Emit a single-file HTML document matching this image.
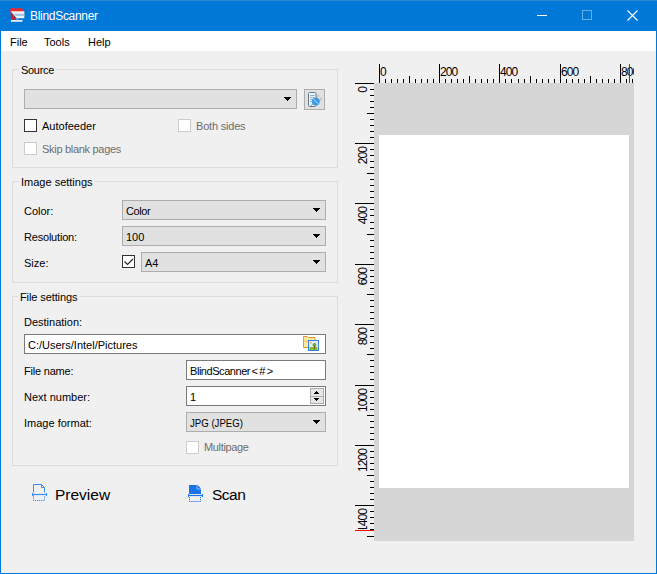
<!DOCTYPE html>
<html><head><meta charset="utf-8">
<style>
*{margin:0;padding:0;box-sizing:border-box}
html,body{width:657px;height:574px;overflow:hidden;background:#f0f0f0}
body{position:relative;font-family:"Liberation Sans",sans-serif;font-size:11px;color:#000}
.a{position:absolute}
.t{position:absolute;white-space:nowrap;line-height:14px}
#win{position:absolute;left:0;top:0;width:657px;height:574px;border:1px solid #0078d7;border-top:none;background:#f0f0f0}
#title{position:absolute;left:0;top:0;width:657px;height:31px;background:#0078d7}
#menu{position:absolute;left:1px;top:31px;width:655px;height:20px;background:#fff}
.grp{position:absolute;border:1px solid #dcdcdc}
.gl{position:absolute;background:#f0f0f0;padding:0 2px;white-space:nowrap;line-height:14px}
.cb{position:absolute;background:#e1e1e1;border:1px solid #adadad}
.cb .arr{position:absolute;right:5px;top:7px;width:7px;height:4px;background:linear-gradient(#000,#000) 0 0/7px 1px no-repeat,linear-gradient(#000,#000) 1px 1px/5px 1px no-repeat,linear-gradient(#000,#000) 2px 2px/3px 1px no-repeat,linear-gradient(#000,#000) 3px 3px/1px 1px no-repeat}
.cb .v{position:absolute;left:3px;top:3px;line-height:14px;white-space:nowrap}
.ck{position:absolute;width:13px;height:13px;border:1px solid #333;background:#fff}
.ck.dis{border-color:#cccccc}
.dis{color:#6d6d6d}
.tb{position:absolute;background:#fff;border:1px solid #7a7a7a}
.tb .v{position:absolute;left:3px;top:3px;line-height:14px;white-space:nowrap}
</style></head><body>
<div id="win"></div>
<div id="title">
  <div class="a" style="left:0;top:0;width:657px;height:1px;background:#2f8ad6"></div>
  <svg class="a" style="left:9px;top:7px" width="16" height="16" viewBox="0 0 16 16">
    <path d="M1 2Q3 0.3 5.5 1.3Q7 1.8 8.5 1.3Q11 0.3 13.5 2L14.5 3V5.5H1.5Z" fill="#ea2a2e"/>
    <path d="M1.5 4.5L2 12.5H7.5Z" fill="#d81c1c"/>
    <path d="M2 4.2H15.3V11.2H8.3Z" fill="#eef2f6"/>
    <path d="M4.2 6.7H15.3V9H6.2Z" fill="#a9c4e0"/>
    <path d="M2.3 4.6L8.3 11.2" stroke="#fff" stroke-width="0.8"/>
    <rect x="7.6" y="11" width="1" height="2" fill="#b0c0d0"/>
    <rect x="2" y="13" width="11.5" height="1.8" fill="#ece6ee"/>
  </svg>
  <div class="t" style="left:30px;top:9px;color:#fff;font-size:12px;letter-spacing:-0.3px">BlindScanner</div>
  <div class="a" style="left:537px;top:15px;width:10px;height:1px;background:#fff"></div>
  <div class="a" style="left:582px;top:10px;width:10px;height:10px;border:1px solid #66aee7"></div>
  <svg class="a" style="left:627px;top:10px" width="11" height="11" viewBox="0 0 11 11"><path d="M0.5 0.5L10.5 10.5M10.5 0.5L0.5 10.5" stroke="#fff" stroke-width="1.1"/></svg>
</div>
<div id="menu">
  <div class="t" style="left:9px;top:4px">File</div>
  <div class="t" style="left:43px;top:4px">Tools</div>
  <div class="t" style="left:87px;top:4px">Help</div>
</div>

<!-- Source -->
<div class="grp" style="left:12px;top:69px;width:326px;height:99px"></div>
<div class="gl" style="left:19px;top:63px;letter-spacing:-0.3px">Source</div>
<div class="cb" style="left:24px;top:89px;width:273px;height:20px"><div class="arr"></div></div>
<div class="cb" style="left:304px;top:89px;width:21px;height:21px"><svg class="a" style="left:1px;top:1px" width="18" height="18" viewBox="0 0 18 18">
<rect x="2.5" y="1.5" width="7.5" height="14" rx="1.2" fill="#e8f1fa" stroke="#667c94"/>
<path d="M4 4.5h4.5M4 6.5h4.5M4 8.5h3M4 10.5h3" stroke="#9ab0c6" stroke-width="1"/>
<path d="M10.5 6.5l2.5-2.5M13.5 9.5l2.5-2.5" stroke="#9a9a9a" stroke-width="1.4" stroke-dasharray="1 0.6"/>
<path d="M5 14.5l2.5-2.5" stroke="#9a9a9a" stroke-width="1.2" stroke-dasharray="1 0.6"/>
<circle cx="9.8" cy="10.6" r="3.9" fill="#3b9be6"/>
<path d="M7.6 8.2l4.5 4.6" stroke="#c0e0f8" stroke-width="1"/>
</svg></div>
<div class="ck" style="left:24px;top:119px"></div>
<div class="t" style="left:42px;top:119px">Autofeeder</div>
<div class="ck dis" style="left:178px;top:119px"></div>
<div class="t dis" style="left:196px;top:119px;letter-spacing:-0.2px">Both sides</div>
<div class="ck dis" style="left:24px;top:142px"></div>
<div class="t dis" style="left:42px;top:142px;letter-spacing:-0.3px">Skip blank pages</div>

<!-- Image settings -->
<div class="grp" style="left:12px;top:181px;width:326px;height:102px"></div>
<div class="gl" style="left:19px;top:175px">Image settings</div>
<div class="t" style="left:24px;top:204px">Color:</div>
<div class="cb" style="left:122px;top:200px;width:204px;height:20px"><div class="v" style="letter-spacing:-0.4px">Color</div><div class="arr"></div></div>
<div class="t" style="left:24px;top:230px;letter-spacing:-0.2px">Resolution:</div>
<div class="cb" style="left:122px;top:226px;width:204px;height:20px"><div class="v">100</div><div class="arr"></div></div>
<div class="t" style="left:24px;top:256px">Size:</div>
<div class="ck" style="left:122px;top:255px"><svg class="a" style="left:0;top:0" width="11" height="11"><path d="M1.5 5.5L4.5 8.5L10 3" stroke="#222" stroke-width="1.1" fill="none"/></svg></div>
<div class="cb" style="left:141px;top:252px;width:185px;height:20px"><div class="v">A4</div><div class="arr"></div></div>

<!-- File settings -->
<div class="grp" style="left:12px;top:296px;width:326px;height:170px"></div>
<div class="gl" style="left:18px;top:290px;letter-spacing:-0.1px">File settings</div>
<div class="t" style="left:24px;top:315px">Destination:</div>
<div class="tb" style="left:24px;top:334px;width:302px;height:20px"><div class="v">C:/Users/Intel/Pictures</div><svg class="a" style="left:277px;top:0px" width="18" height="18" viewBox="0 0 18 18">
<path d="M1.5 1.5h4l1 1h6.5v10h-11.5z" fill="#fde8a0" stroke="#e39b3a"/>
<path d="M2 6h10" stroke="#f2c060" stroke-width="1"/>
<rect x="6.5" y="5.5" width="10" height="10" fill="#dff0fc" stroke="#3c7fd8"/>
<rect x="7.5" y="12" width="8" height="3" fill="#7cbb2e"/>
<circle cx="12.5" cy="10" r="2" fill="#6aa832"/>
<path d="M12.5 11v3" stroke="#7a5a30"/>
<rect x="8" y="7" width="1.5" height="1.5" fill="#f5a623"/>
</svg></div>
<div class="t" style="left:24px;top:364px;letter-spacing:-0.2px">File name:</div>
<div class="tb" style="left:186px;top:360px;width:140px;height:20px"><div class="v"><span style="letter-spacing:-0.45px">BlindScanner</span><span style="letter-spacing:1.4px;margin-left:1.5px">&lt;#&gt;</span></div></div>
<div class="t" style="left:24px;top:390px">Next number:</div>
<div class="tb" style="left:186px;top:386px;width:140px;height:20px"><div class="v">1</div><svg class="a" style="left:123px;top:1px" width="14" height="16" viewBox="0 0 14 16" shape-rendering="crispEdges">
<rect x="0.5" y="0.5" width="13" height="15" fill="#e6e6e6" stroke="#adadad"/>
<path d="M0 8.5h14" stroke="#adadad"/>
<path d="M6 3h1v1H6zM5 4h3v1H5zM4 5h5v1H4zM4 10h5v1H4zM5 11h3v1H5zM6 12h1v1H6z" fill="#000"/>
</svg></div>
<div class="t" style="left:24px;top:416px">Image format:</div>
<div class="cb" style="left:186px;top:412px;width:140px;height:20px"><div class="v" style="transform:scaleX(0.875);transform-origin:0 0">JPG (JPEG)</div><div class="arr"></div></div>
<div class="ck dis" style="left:186px;top:441px"></div>
<div class="t dis" style="left:204px;top:440px;letter-spacing:-0.35px">Multipage</div>

<!-- Buttons -->
<svg class="a" style="left:30px;top:482px" width="20" height="22" viewBox="0 0 20 22">
<path d="M3.5 10.5V2.5h8l3 3v5" fill="none" stroke="#3d8ef0"/>
<path d="M11.5 2.5v3h3" fill="none" stroke="#3d8ef0"/>
<path d="M2 12.5h15" stroke="#3d8ef0" stroke-width="1.2"/>
<path d="M2.5 11v3M16.5 11v3" stroke="#3d8ef0"/>
<path d="M3.5 13.5v5h11v-5" fill="none" stroke="#3d8ef0" stroke-dasharray="1.2 0.9"/>
</svg>
<div class="t" style="left:55px;top:487px;font-size:15.5px;line-height:16px">Preview</div>
<svg class="a" style="left:186px;top:483px" width="20" height="22" viewBox="0 0 20 22">
<path d="M3 2h8.5l3.5 3.5V11H3z" fill="#1a73e8"/>
<path d="M11 2v4h4" fill="none" stroke="#9ec4f5" stroke-width="0.9"/>
<path d="M2 12.5h15" stroke="#1a73e8" stroke-width="1.2"/>
<path d="M2.5 11v3M16.5 11v3" stroke="#1a73e8"/>
<path d="M3.5 14v4.5h11V14" fill="none" stroke="#1a73e8" stroke-dasharray="1.2 0.9"/>
</svg>
<div class="t" style="left:212px;top:487px;font-size:15.5px;line-height:16px;letter-spacing:-0.5px">Scan</div>

<!-- Preview area -->
<div class="a" style="left:374px;top:83px;width:260px;height:458px;background:#d6d6d6"></div>
<div class="a" style="left:379px;top:135px;width:250px;height:353px;background:#fff"></div>
<svg class="a" style="left:0;top:0" width="657" height="574">
<defs><clipPath id="hc"><rect x="374" y="60" width="260" height="23"/></clipPath><clipPath id="vc"><rect x="350" y="83" width="24" height="446"/></clipPath></defs>
<path d="M379.5 64V83M385.5 79V83M391.5 79V83M397.5 79V83M403.5 79V83M409.5 76V83M415.5 79V83M421.5 79V83M427.5 79V83M433.5 79V83M439.5 64V83M445.5 79V83M451.5 79V83M457.5 79V83M463.5 79V83M469.5 76V83M475.5 79V83M481.5 79V83M487.5 79V83M493.5 79V83M499.5 64V83M505.5 79V83M511.5 79V83M518.5 79V83M524.5 79V83M530.5 76V83M536.5 79V83M542.5 79V83M548.5 79V83M554.5 79V83M560.5 64V83M566.5 79V83M572.5 79V83M578.5 79V83M584.5 79V83M590.5 76V83M596.5 79V83M602.5 79V83M608.5 79V83M614.5 79V83M620.5 64V83M626.5 79V83M632.5 79V83M355 83.5H374M370 89.5H374M370 95.5H374M370 101.5H374M370 107.5H374M367 113.5H374M370 119.5H374M370 125.5H374M370 131.5H374M370 137.5H374M355 143.5H374M370 149.5H374M370 155.5H374M370 161.5H374M370 167.5H374M367 173.5H374M370 179.5H374M370 185.5H374M370 191.5H374M370 197.5H374M355 203.5H374M370 209.5H374M370 215.5H374M370 222.5H374M370 228.5H374M367 234.5H374M370 240.5H374M370 246.5H374M370 252.5H374M370 258.5H374M355 264.5H374M370 270.5H374M370 276.5H374M370 282.5H374M370 288.5H374M367 294.5H374M370 300.5H374M370 306.5H374M370 312.5H374M370 318.5H374M355 324.5H374M370 330.5H374M370 336.5H374M370 342.5H374M370 348.5H374M367 354.5H374M370 360.5H374M370 366.5H374M370 372.5H374M370 379.5H374M355 385.5H374M370 391.5H374M370 397.5H374M370 403.5H374M370 409.5H374M367 415.5H374M370 421.5H374M370 427.5H374M370 433.5H374M370 439.5H374M355 445.5H374M370 451.5H374M370 457.5H374M370 463.5H374M370 469.5H374M367 475.5H374M370 481.5H374M370 487.5H374M370 493.5H374M370 499.5H374M355 505.5H374M370 511.5H374M370 517.5H374M370 523.5H374M370 529.5H374M367 536.5H374" stroke="#000" stroke-width="1" fill="none" shape-rendering="crispEdges"/>
<g font-family="Liberation Sans" font-size="12" letter-spacing="-0.9" fill="#000">
<g clip-path="url(#hc)"><text x="380" y="76">0</text><text x="440" y="76">200</text><text x="500" y="76">400</text><text x="561" y="76">600</text><text x="621" y="76">800</text></g>
<g clip-path="url(#vc)"><text transform="translate(367,87) rotate(-90)" text-anchor="end">0</text><text transform="translate(367,147) rotate(-90)" text-anchor="end">200</text><text transform="translate(367,207) rotate(-90)" text-anchor="end">400</text><text transform="translate(367,268) rotate(-90)" text-anchor="end">600</text><text transform="translate(367,328) rotate(-90)" text-anchor="end">800</text><text transform="translate(367,389) rotate(-90)" text-anchor="end">1000</text><text transform="translate(367,449) rotate(-90)" text-anchor="end">1200</text><text transform="translate(367,509) rotate(-90)" text-anchor="end">1400</text></g>
</g>
<path d="M629.5 64V83M355 530.5H374" stroke="#f00" stroke-width="1" shape-rendering="crispEdges"/>
</svg>
</body></html>
